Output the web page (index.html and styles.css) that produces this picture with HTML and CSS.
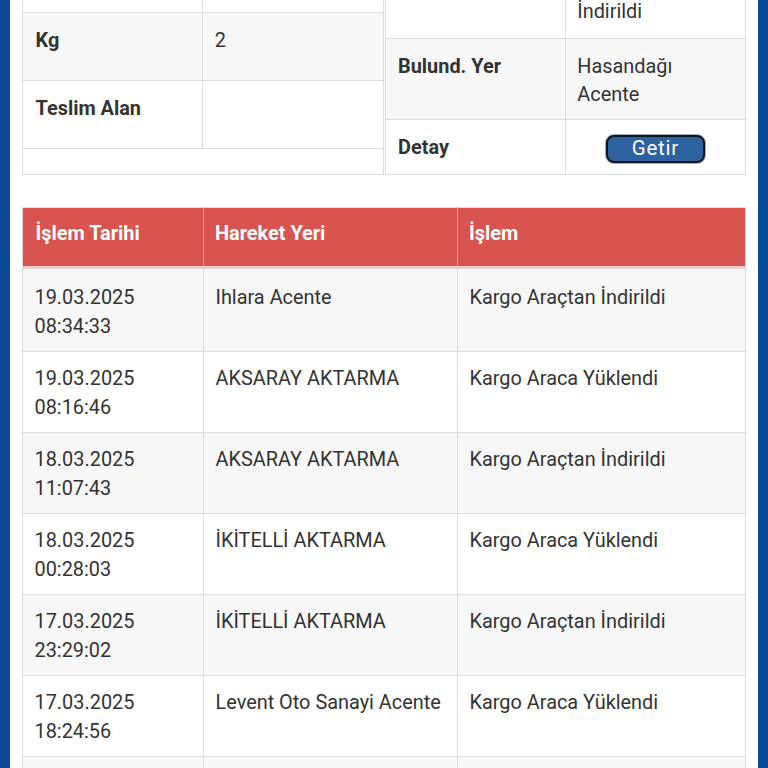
FILE: index.html
```html
<!DOCTYPE html>
<html lang="tr">
<head>
<meta charset="utf-8">
<title>Kargo Takip</title>
<link rel="stylesheet" href="styles.css">
</head>
<body>
<div class="page">
  <div class="side"></div>
  <main class="content">
    <section class="info">
      <div class="info-box">
        <table class="info-table tall">
          <tr><td class="label">Adet</td><td>1</td></tr>
          <tr><td class="label">Desi</td><td>2</td></tr>
          <tr><td class="label">Kg</td><td>2</td></tr>
          <tr><td class="label">Teslim Alan</td><td></td></tr>
        </table>
      </div>
      <div class="info-box">
        <table class="info-table">
          <tr class="upper"><td class="label">Çıkış Yeri</td><td>Levent Oto<br>Sanayi Acente</td></tr>
          <tr class="upper"><td class="label">Durum</td><td>Kargo Araçtan İndirildi</td></tr>
          <tr><td class="label">Bulund. Yer</td><td>Hasandağı<br>Acente</td></tr>
          <tr class="action"><td class="label">Detay</td><td class="center"><button class="btn" type="button">Getir</button></td></tr>
        </table>
      </div>
    </section>

    <table class="moves">
      <colgroup><col class="c1"><col class="c2"><col class="c3"></colgroup>
      <thead>
        <tr><th>İşlem Tarihi</th><th>Hareket Yeri</th><th>İşlem</th></tr>
      </thead>
      <tbody>
        <tr><td>19.03.2025<br>08:34:33</td><td>Ihlara Acente</td><td>Kargo Araçtan İndirildi</td></tr>
        <tr><td>19.03.2025<br>08:16:46</td><td>AKSARAY AKTARMA</td><td>Kargo Araca Yüklendi</td></tr>
        <tr><td>18.03.2025<br>11:07:43</td><td>AKSARAY AKTARMA</td><td>Kargo Araçtan İndirildi</td></tr>
        <tr><td>18.03.2025<br>00:28:03</td><td>İKİTELLİ AKTARMA</td><td>Kargo Araca Yüklendi</td></tr>
        <tr><td>17.03.2025<br>23:29:02</td><td>İKİTELLİ AKTARMA</td><td>Kargo Araçtan İndirildi</td></tr>
        <tr><td>17.03.2025<br>18:24:56</td><td>Levent Oto Sanayi Acente</td><td>Kargo Araca Yüklendi</td></tr>
        <tr><td>17.03.2025<br>17:52:10</td><td>Levent Oto Sanayi Acente</td><td>Kargo Kabul Edildi</td></tr>
      </tbody>
    </table>
  </main>
  <div class="side"></div>
</div>
</body>
</html>
```

FILE: styles.css
```css
* { box-sizing: border-box; }

html, body {
  margin: 0;
  padding: 0;
  background: #fff;
}

body {
  font-family: Roboto, "Noto Sans", "Liberation Sans", sans-serif;
  font-size: 19.9px;
  line-height: 28.4px;
  color: #333;
}

.page {
  display: flex;
  min-height: 100vh;
  overflow: hidden;
}

.side {
  flex: 0 0 10px;
  background: #0b4a94;
}

.content {
  flex: 1;
  min-width: 0;
  padding: 0 12px;
  background: #fff;
}

/* top detail tables */
.info {
  display: grid;
  grid-template-columns: 1fr 1fr;
  gap: 1px;
  margin-top: -124px;
  margin-bottom: 32px;
}

.info-box {
  border: 1px solid #ddd;
  background: #fff;
}

.info-table {
  width: 100%;
  border-collapse: collapse;
  table-layout: fixed;
}

.info-table td {
  padding: 14px 11.5px 9.2px 12.5px;
  vertical-align: top;
}

.info-table td + td {
  border-left: 1px solid #ddd;
  padding-left: 11.5px;
}

.info-table tr + tr td { border-top: 1px solid #ddd; }
.info-table tr:nth-child(odd) td { background: #f7f7f7; }

.info-table .upper td { padding-top: 12px; padding-bottom: 11.2px; }

.info-table .label { font-weight: 700; }
.info-table .center { text-align: center; }

.info-table.tall td { padding-bottom: 24.6px; }
.info-table.tall tr:last-child td { border-bottom: 1px solid #ddd; }

.info-table .action td { padding-bottom: 11.6px; }

.btn {
  display: inline-block;
  vertical-align: middle;
  width: 99px;
  height: 28px;
  padding: 0;
  border: 2px solid #0e151d;
  border-radius: 8px;
  background: #2d62a0;
  color: #fff;
  font-family: Roboto, "Noto Sans", sans-serif;
  font-size: 20.5px;
  line-height: 23px;
  letter-spacing: 0.8px;
  box-shadow: 0 0 0 1px #a3afbb;
}

/* movement history */
.moves {
  width: 100%;
  border-collapse: collapse;
  table-layout: fixed;
  border: 1px solid #ddd;
}

.c1 { width: 181px; }
.c2 { width: 254px; }

.moves th {
  background: #d9534f;
  color: #fff;
  font-weight: 700;
  text-align: left;
  vertical-align: top;
  padding: 12px 11.5px 17.6px 12.5px;
  border-bottom: 3px solid #e6cfce;
}

.moves th + th {
  border-left: 1px solid #e59a97;
  padding-left: 11px;
}

.moves td {
  padding: 13px 11.5px 10.2px 11.5px;
  border: 1px solid #ddd;
  vertical-align: top;
}

.moves tbody tr:nth-child(odd) td { background: #f7f7f7; }
.moves tbody tr:first-child td { padding-top: 15px; padding-bottom: 10.2px; }
```
